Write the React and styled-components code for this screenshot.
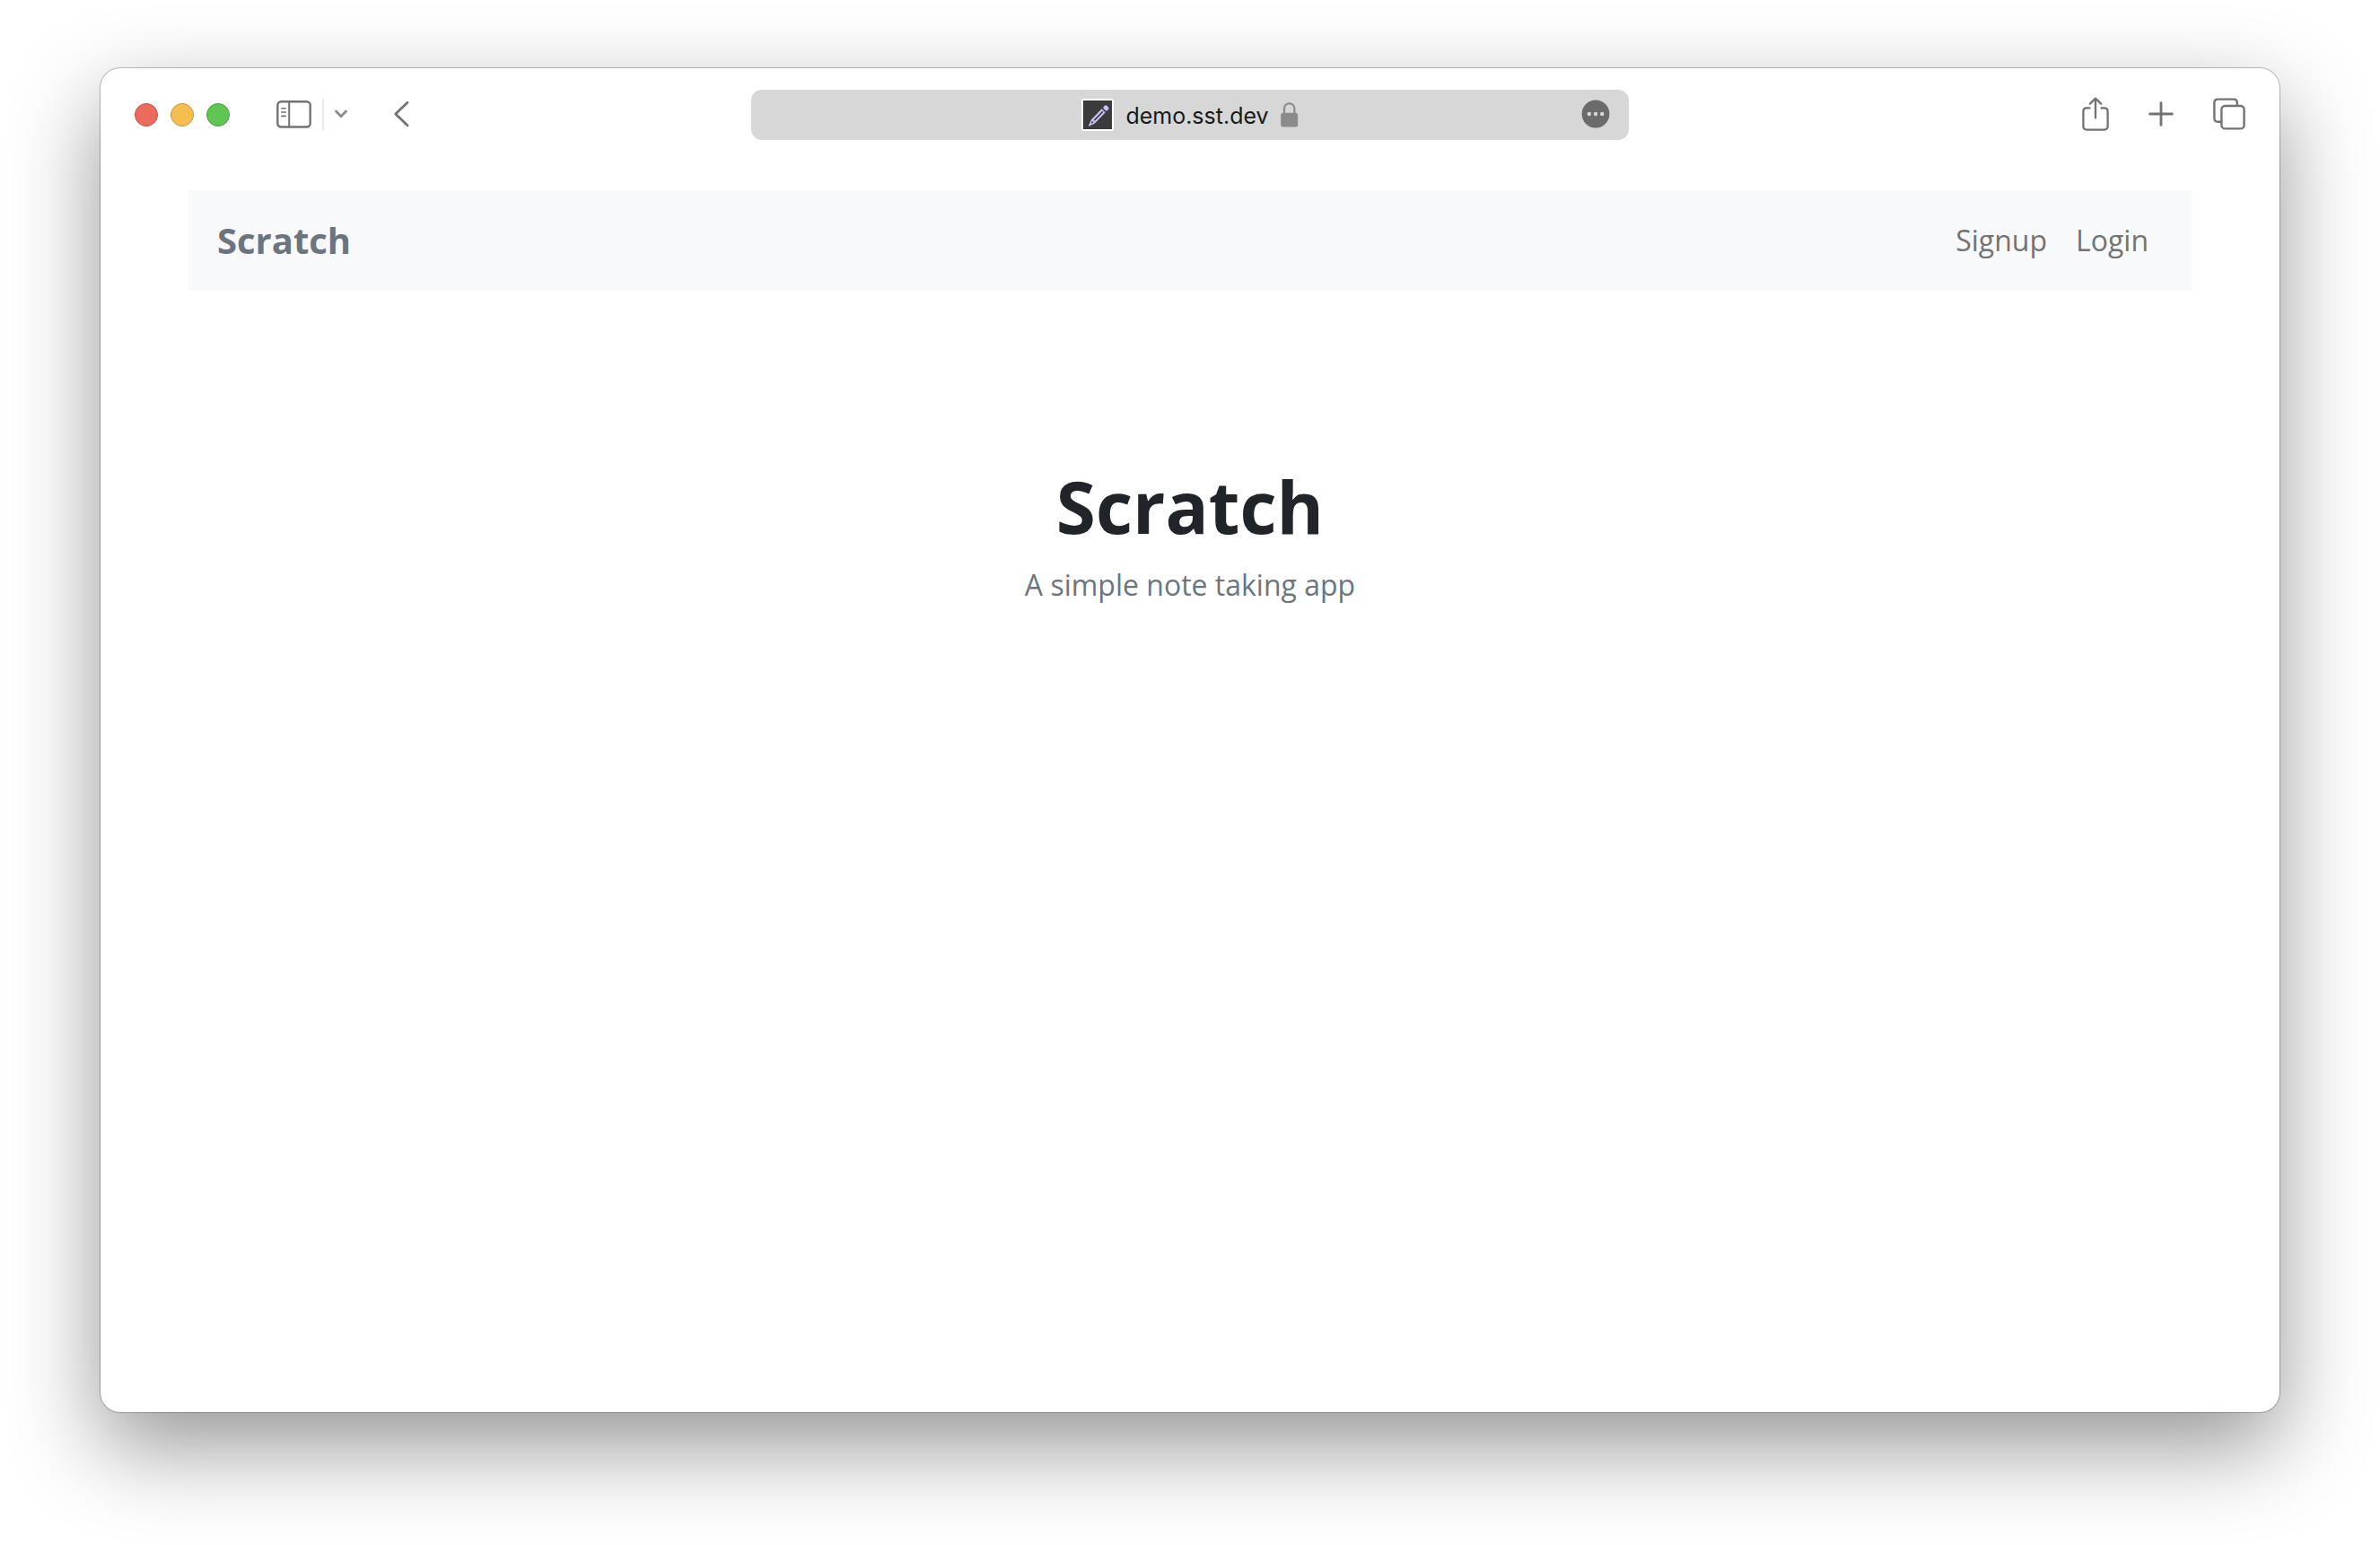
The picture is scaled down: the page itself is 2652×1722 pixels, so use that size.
import React from "react";
import styled, { createGlobalStyle } from "styled-components";

const GlobalStyle = createGlobalStyle`
  *, *::before, *::after { box-sizing: border-box; }
  body {
    margin: 0;
    background: #fff;
    color: #212529;
    font-family: "Open Sans", "Noto Sans", sans-serif;
    font-size: 32px;
    line-height: 48px;
    -webkit-font-smoothing: antialiased;
  }
`;

const Desktop = styled.div`
  display: flex;
  min-height: 100vh;
  padding: 76px 112px 148px;
`;

const Window = styled.div`
  flex: 1;
  min-width: 0;
  background: #fff;
  border-radius: 22px;
  box-shadow:
    0 0 0 1px rgba(0, 0, 0, 0.24),
    0 38px 100px rgba(0, 0, 0, 0.42);
`;

const Toolbar = styled.header`
  display: grid;
  grid-template-columns: minmax(0, 1fr) minmax(320px, 978px) minmax(0, 1fr);
  align-items: center;
  padding: 24px 38px;
`;

const ToolGroup = styled.div`
  display: flex;
  align-items: center;
  justify-content: ${(p) => (p.$end ? "flex-end" : "flex-start")};
  gap: ${(p) => p.$gap}px;
`;

const Light = styled.button`
  width: 26px;
  height: 26px;
  padding: 0;
  border: 1px solid ${(p) => p.$edge};
  border-radius: 50%;
  background: ${(p) => p.$fill};
`;

const IconButton = styled.button`
  display: flex;
  padding: 0 0 2px;
  border: 0;
  background: none;
  color: ${(p) => p.$color || "#737373"};

  svg {
    display: block;
    fill: none;
    stroke: currentColor;
    stroke-linecap: round;
    stroke-linejoin: round;
  }
`;

const Divider = styled.span`
  width: 2px;
  height: 36px;
  background: #ececec;
`;

const AddressBar = styled.div`
  display: grid;
  grid-template-columns: 1fr auto 1fr;
  align-items: center;
  height: 56px;
  padding: 0 21px;
  border-radius: 12px;
  background: #d7d7d7;
`;

const Address = styled.label`
  grid-column: 2;
  display: flex;
  align-items: center;
  gap: 13px;
`;

const AddressInput = styled.input`
  field-sizing: content;
  padding: 2px 0 0;
  border: 0;
  outline: 0;
  background: none;
  color: #1a1a1a;
  font: 400 25px/32px Inter, "Liberation Sans", sans-serif;
`;

const MoreButton = styled(IconButton)`
  justify-self: end;
`;

const Container = styled.div`
  padding: 32px 98px;
`;

const Navbar = styled.nav`
  display: flex;
  align-items: center;
  justify-content: space-between;
  margin-bottom: 32px;
  padding: 16px 32px;
  background: #f8f9fb;
`;

const Brand = styled.a`
  padding: 10px 0;
  color: #6c757d;
  font-size: 40px;
  font-weight: 700;
  line-height: 60px;
  text-decoration: none;
`;

const NavLinks = styled.div`
  display: flex;
`;

const NavLink = styled.a`
  padding: 16px;
  color: #737373;
  text-decoration: none;
`;

const Lander = styled.main`
  padding: 160px 0;
  text-align: center;
`;

const Title = styled.h1`
  margin: 0 0 16px;
  font-size: 80px;
  font-weight: 700;
  line-height: 96px;
`;

const Tagline = styled.p`
  margin: 0;
  color: #6c757d;
`;

const SidebarIcon = () => (
  <svg width="39" height="31" viewBox="0 0 39 31" strokeWidth="2.4">
    <rect x="1.3" y="1.3" width="36.4" height="28.2" rx="4" />
    <path d="M14.2 1.5V29.5" strokeWidth="2" />
    <path d="M5.8 8.7h4.4M5.8 13h4.4M5.8 17.4h4.4" strokeWidth="1.6" />
  </svg>
);

const ChevronDownIcon = () => (
  <svg width="14" height="10" viewBox="0 0 14 10" strokeWidth="2.8">
    <path d="M1.5 2L7 7.8L12.5 2" />
  </svg>
);

const BackIcon = () => (
  <svg width="17" height="30" viewBox="0 0 17 30" strokeWidth="2.8">
    <path d="M15 2.2L1.8 15L15 27.8" />
  </svg>
);

const Favicon = () => (
  <svg width="36" height="36" viewBox="0 0 36 36" aria-hidden="true">
    <rect width="36" height="36" rx="3" fill="#fff" />
    <rect x="2" y="2" width="32" height="32" fill="#3b3b3b" />
    <g transform="translate(7.6 31) rotate(-46)" fill="#c9c3fa">
      <path
        fillRule="evenodd"
        d="M0 0L7.6 -2.9H24.6V2.9H7.6ZM4.6 0L7.4 1.3V-1.3ZM9.6 -0.7V0.9H23.4V-0.7Z"
      />
      <rect x="26.2" y="-2.9" width="4.8" height="5.8" rx="1.6" />
    </g>
  </svg>
);

const LockIcon = () => (
  <svg width="20" height="28" viewBox="0 0 20 28" aria-hidden="true">
    <path
      d="M4 13V7.6C4 3.9 6.4 1.4 9.7 1.4S15.4 3.9 15.4 7.6V13"
      fill="none"
      stroke="#8b8b8b"
      strokeWidth="2.2"
    />
    <rect x="0.2" y="11.8" width="19" height="15.6" rx="2.6" fill="#8b8b8b" />
  </svg>
);

const MoreIcon = () => (
  <svg width="32" height="32" viewBox="0 0 32 32">
    <circle cx="16" cy="16" r="15.4" fill="#6b6b6b" stroke="none" />
    <g fill="#d7d7d7" stroke="none">
      <circle cx="8.8" cy="16" r="2.2" />
      <circle cx="16" cy="16" r="2.2" />
      <circle cx="23.2" cy="16" r="2.2" />
    </g>
  </svg>
);

const ShareIcon = () => (
  <svg width="30" height="38" viewBox="0 0 30 38" strokeWidth="2.3">
    <path d="M9.4 12.4H5.2C2.6 12.4 1.4 13.6 1.4 16.2V32.6C1.4 35.2 2.6 36.6 5.2 36.6H24.8C27.4 36.6 28.6 35.2 28.6 32.6V16.2C28.6 13.6 27.4 12.4 24.8 12.4H20.6" strokeLinecap="butt" />
    <path d="M15 23.4V1.8M8.9 7.6L15 1.6L21.1 7.6" />
  </svg>
);

const PlusIcon = () => (
  <svg width="28" height="28" viewBox="0 0 28 28" strokeWidth="2.8">
    <path d="M14 1.6V26.4M1.6 14H26.4" />
  </svg>
);

const TabsIcon = () => (
  <svg width="36" height="36" viewBox="0 0 36 36" strokeWidth="2.4">
    <path d="M9.4 26.8H5.2C2.6 26.8 1.4 25.4 1.4 22.8V5.4C1.4 2.8 2.6 1.6 5.2 1.6H23C25.6 1.6 26.8 2.8 26.8 5.4V9" strokeLinecap="butt" />
    <rect x="9.4" y="9" width="25.2" height="25.4" rx="4" />
  </svg>
);

export default function App() {
  return (
    <>
      <GlobalStyle />
      <Desktop>
        <Window>
          <Toolbar>
            <ToolGroup $gap={52}>
              <ToolGroup $gap={52}>
                <ToolGroup $gap={14}>
                  <Light aria-label="Close" $fill="#ec6a5e" $edge="#c24d43" />
                  <Light aria-label="Minimize" $fill="#f4bf4f" $edge="#c8963a" />
                  <Light aria-label="Zoom" $fill="#61c554" $edge="#48a03c" />
                </ToolGroup>
                <ToolGroup $gap={12}>
                  <IconButton aria-label="Toggle sidebar">
                    <SidebarIcon />
                  </IconButton>
                  <Divider />
                  <IconButton aria-label="Tab groups" $color="#8b8b90">
                    <ChevronDownIcon />
                  </IconButton>
                </ToolGroup>
              </ToolGroup>
              <IconButton aria-label="Back">
                <BackIcon />
              </IconButton>
            </ToolGroup>
            <AddressBar>
              <Address>
                <Favicon />
                <AddressInput aria-label="Address" defaultValue="demo.sst.dev" />
                <LockIcon />
              </Address>
              <MoreButton aria-label="Page options">
                <MoreIcon />
              </MoreButton>
            </AddressBar>
            <ToolGroup $gap={44} $end>
              <IconButton aria-label="Share">
                <ShareIcon />
              </IconButton>
              <IconButton aria-label="New tab">
                <PlusIcon />
              </IconButton>
              <IconButton aria-label="Show all tabs">
                <TabsIcon />
              </IconButton>
            </ToolGroup>
          </Toolbar>
          <Container>
            <Navbar>
              <Brand href="#home">Scratch</Brand>
              <NavLinks>
                <NavLink href="#signup">Signup</NavLink>
                <NavLink href="#login">Login</NavLink>
              </NavLinks>
            </Navbar>
            <Lander>
              <Title>Scratch</Title>
              <Tagline>A simple note taking app</Tagline>
            </Lander>
          </Container>
        </Window>
      </Desktop>
    </>
  );
}
